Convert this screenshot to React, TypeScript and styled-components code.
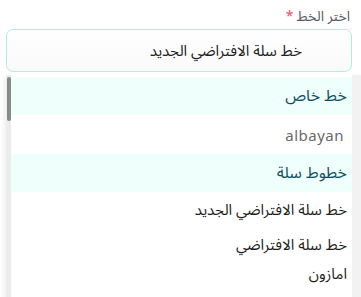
import React from 'react'
import styled, { createGlobalStyle } from 'styled-components'

const GlobalStyle = createGlobalStyle`
  html, body {
    margin: 0;
    padding: 0;
    background: #fff;
    overflow: hidden;
  }
  body {
    font-family: "Noto Sans Arabic", "DejaVu Sans", sans-serif;
  }
`

const Page = styled.div`
  direction: rtl;
  width: 361px;
  height: 297px;
  overflow: hidden;
  padding-top: 6px;
  box-sizing: border-box;
`

const Label = styled.div`
  display: flex;
  align-items: center;
  gap: 3px;
  padding-right: 11px;
  height: 20px;
  font-size: 14px;
  color: #555b63;
`

const Star = styled.span`
  color: #ef4b5f;
  font-size: 14px;
`

const Input = styled.div`
  margin: 3px 9px 0 6px;
  height: 43px;
  box-sizing: border-box;
  border: 1px solid #a9f3de;
  border-radius: 7px;
  background: linear-gradient(#ffffff, #fafafa);
  display: flex;
  align-items: center;
  padding-right: 49px;
  font-size: 15px;
  color: #222;
`

const Panel = styled.div`
  margin: 3px 0 0 6px;
  display: flex;
  background: #f2f2f2;
  padding-right: 9px;
  box-shadow: -2px 2px 6px rgba(0, 0, 0, 0.07);
  height: 230px;
`

const Track = styled.div`
  width: 5px;
  background: #ececec;
  padding-top: 2px;
`

const Thumb = styled.div`
  width: 4px;
  height: 44px;
  border-radius: 2px;
  background: #8a8a8a;
`

const List = styled.div`
  flex: 1;
  background: #fff;
  padding-top: 2px;
`

const Option = styled.div<{ $group?: boolean; $h: number }>`
  height: ${({ $h }) => $h}px;
  display: flex;
  align-items: center;
  padding-right: 5px;
  line-height: 20px;
  background: ${({ $group }) => ($group ? '#effffb' : '#fff')};
  color: ${({ $group }) => ($group ? '#0d5060' : '#1d1d1d')};
  font-size: ${({ $group }) => ($group ? 16 : 15)}px;
`

const Latin = styled.span`
  font-family: "Noto Sans", "Open Sans", sans-serif;
  color: #6a6a6a;
  font-size: 15px;
  letter-spacing: 0.5px;
  padding-right: 3px;
  direction: ltr;
`

const rows = [
  { text: 'خط خاص', group: true, h: 38 },
  { text: 'albayan', latin: true, h: 39 },
  { text: 'خطوط سلة', group: true, h: 38 },
  { text: 'خط سلة الافتراضي الجديد', h: 36 },
  { text: 'خط سلة الافتراضي', h: 34 },
  { text: 'امازون', h: 24 },
]

export default function App() {
  return (
    <Page>
      <GlobalStyle />
      <Label>
        اختر الخط <Star>*</Star>
      </Label>
      <Input>خط سلة الافتراضي الجديد</Input>
      <Panel>
        <List>
          {rows.map((r) => (
            <Option key={r.text} $group={r.group} $h={r.h}>
              {r.latin ? <Latin>{r.text}</Latin> : r.text}
            </Option>
          ))}
        </List>
        <Track>
          <Thumb />
        </Track>
      </Panel>
    </Page>
  )
}
